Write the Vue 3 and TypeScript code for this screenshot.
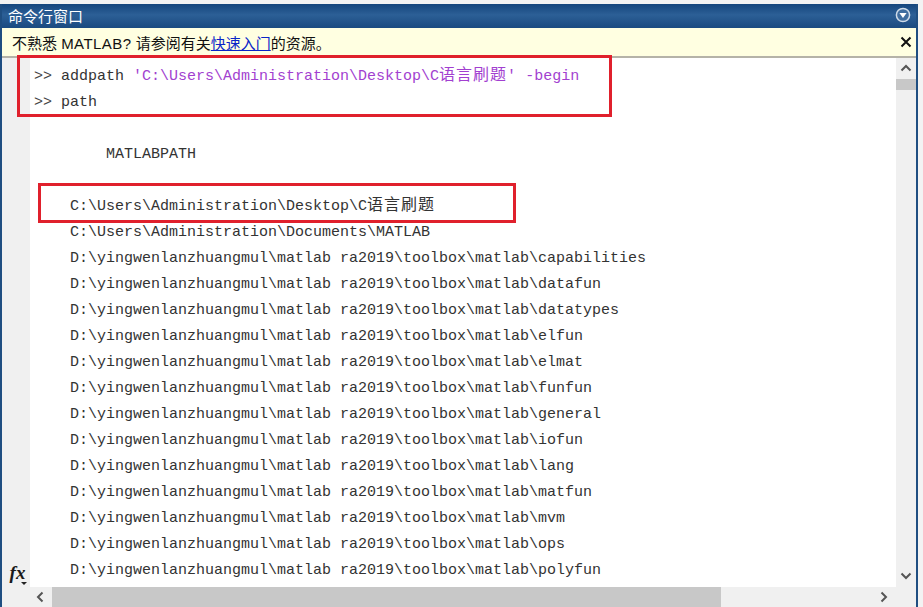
<script setup lang="ts">
const paths: string[] = [
  'capabilities', 'datafun', 'datatypes', 'elfun', 'elmat', 'funfun', 'general',
  'iofun', 'lang', 'matfun', 'mvm', 'ops', 'polyfun',
]
const root = 'D:\\yingwenlanzhuangmul\\matlab ra2019\\toolbox\\matlab\\'
</script>

<template>
  <div class="window">
    <div class="panel">
      <header class="title">
        <span class="title-text">命令行窗口</span>
        <svg class="menu-icon" width="16" height="16" viewBox="0 0 16 16">
          <circle cx="8" cy="8" r="6.6" fill="#3f6d9f" stroke="#cfdbe8" stroke-width="1.5" />
          <path d="M4.4 6 H11.6 L8 11 Z" fill="#fff" />
        </svg>
      </header>
      <div class="notice">
        <span>不熟悉 <span class="latin">MATLAB?</span> 请参阅有关<a class="link">快速入门</a>的资源。</span>
        <svg width="12" height="12" viewBox="0 0 12 12">
          <path d="M1.5 1.5 L10.5 10.5 M10.5 1.5 L1.5 10.5" stroke="#111" stroke-width="2" fill="none" />
        </svg>
      </div>
      <div class="body">
        <div class="gutter">
          <span class="fx"><i>fx</i><b class="fx-caret"></b></span>
        </div>
        <div class="console">
          <div class="line"><span class="prompt">&gt;&gt; </span>addpath <span class="str">'C:\Users\Administration\Desktop\C<span class="cjk">语言刷题</span>'</span> <span class="str">-begin</span></div>
          <div class="line"><span class="prompt">&gt;&gt; </span>path</div>
          <div class="line"></div>
          <div class="line output-head">MATLABPATH</div>
          <div class="line"></div>
          <div class="line output">C:\Users\Administration\Desktop\C<span class="cjk">语言刷题</span></div>
          <div class="line output">C:\Users\Administration\Documents\MATLAB</div>
          <div v-for="p in paths" :key="p" class="line output">{{ root + p }}</div>
        </div>
        <div class="vscroll">
          <svg width="14" height="10" viewBox="0 0 14 10"><path d="M2.5 7.5 L7 3 L11.500 7.500" stroke="#555" stroke-width="2" fill="none" /></svg>
          <div class="vthumb"></div>
          <div class="spacer"></div>
          <svg width="14" height="10" viewBox="0 0 14 10"><path d="M2.500 2.500 L7 7 L11.500 2.500" stroke="#555" stroke-width="2" fill="none" /></svg>
        </div>
      </div>
      <div class="hscroll">
        <svg width="10" height="14" viewBox="0 0 10 14"><path d="M7.500 2.500 L3 7 L7.500 11.500" stroke="#555" stroke-width="2" fill="none" /></svg>
        <div class="hthumb"></div>
        <svg width="10" height="14" viewBox="0 0 10 14"><path d="M2.500 2.500 L7 7 L2.500 11.500" stroke="#555" stroke-width="2" fill="none" /></svg>
      </div>
    </div>
    <div class="mark mark-a"></div>
    <div class="mark mark-b"></div>
  </div>
</template>

<style scoped>
.window {
  position: relative;
  width: 923px;
  height: 607px;
  box-sizing: border-box;
  padding: 4px 5px 0 0;
  background: #f3f3f3;
  overflow: hidden;
  font-family: "Liberation Sans", "Noto Sans CJK SC", sans-serif;
}
.panel {
  height: 603px;
  box-sizing: border-box;
  border-left: 2px solid #1f4e81;
  border-right: 2px solid #1f4e81;
  display: flex;
  flex-direction: column;
  background: #fff;
}
.title {
  height: 24px;
  flex: none;
  box-sizing: border-box;
  padding: 0 5px 2px 6px;
  display: flex;
  align-items: center;
  justify-content: space-between;
  background: linear-gradient(#15467d, #2c5f96 45%, #1a4a80);
  color: #fff;
  font-size: 15px;
}
.notice {
  height: 30px;
  flex: none;
  box-sizing: border-box;
  padding: 0 4px 0 10px;
  display: flex;
  align-items: center;
  justify-content: space-between;
  background: #ffffe1;
  border-bottom: 2px solid #b5b3a8;
  color: #111;
  font-size: 15px;
}
.latin {
  letter-spacing: 0.45px;
}
.link {
  color: #0a24c8;
  text-decoration: underline;
}
.body {
  flex: 1;
  min-height: 0;
  display: flex;
}
.gutter {
  width: 28px;
  flex: none;
  background: #f0f0f0;
  display: flex;
  align-items: flex-end;
  justify-content: center;
}
.fx {
  position: relative;
  margin: 0 0 3px 3px;
  font-family: "Liberation Serif", serif;
  font-size: 19px;
  font-weight: 700;
  color: #1a1a1a;
  line-height: 22px;
}
.fx-caret {
  position: absolute;
  left: 11px;
  bottom: -1px;
  border-left: 3px solid transparent;
  border-right: 3px solid transparent;
  border-top: 3px solid #222;
}
.console {
  flex: 1;
  min-width: 0;
  padding: 6px 0 0 4px;
  overflow: hidden;
  font-family: "Liberation Mono", "Noto Sans CJK SC", monospace;
  font-size: 15px;
  color: #333;
}
.line {
  height: 26px;
  line-height: 26px;
  white-space: pre;
}
.prompt {
  color: #444;
}
.str {
  color: #a23fd0;
}
.cjk {
  font-family: "Noto Sans CJK SC", sans-serif;
  font-size: 16px;
  line-height: 1;
  letter-spacing: 1px;
}
.output-head {
  padding-left: 72px;
}
.output {
  padding-left: 36px;
}
.vscroll {
  width: 20px;
  flex: none;
  background: #f0f0f0;
  display: flex;
  flex-direction: column;
  align-items: center;
  padding: 5px 0 6px;
  box-sizing: border-box;
}
.vthumb {
  width: 20px;
  height: 11px;
  margin-top: 6px;
  background: #c8c8c8;
}
.spacer {
  flex: 1;
}
.hscroll {
  height: 20px;
  flex: none;
  display: flex;
  align-items: center;
  padding-left: 33px;
  padding-right: 27px;
  background: #f0f0f0;
}
.hthumb {
  width: 669px;
  height: 20px;
  margin: 0 auto 0 7px;
  background: #c8c8c8;
}
.mark {
  position: absolute;
  box-sizing: border-box;
  border: 3px solid #e0202c;
}
.mark-a {
  left: 17px;
  top: 55px;
  width: 595px;
  height: 62px;
}
.mark-b {
  left: 38px;
  top: 183px;
  width: 478px;
  height: 40px;
}
</style>
